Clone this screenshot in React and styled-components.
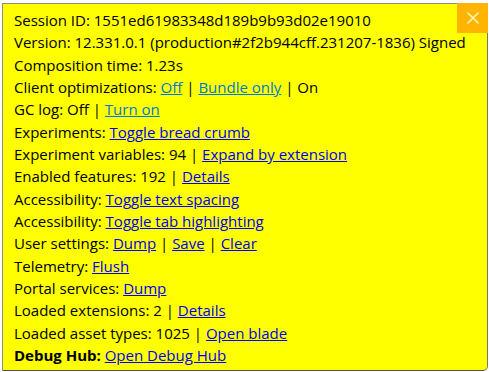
import React from "react";
import styled, { createGlobalStyle } from "styled-components";

const GlobalStyle = createGlobalStyle`
    html, body {
        margin: 0;
        padding: 0;
        background: #fff;
    }
    body {
        font-family: "Open Sans", "Noto Sans", sans-serif;
    }
`;

const Page = styled.div`
    padding: 3px 1px 1px 2px;
`;

const Panel = styled.div`
    position: relative;
    background: #ffff00;
    border: 1px solid #8a8a8a;
    border-bottom-color: #555;
    border-right-color: #777;
    border-bottom-right-radius: 5px;
    padding: 5px 11px 2px 11px;
    color: #000;
    font-size: 15px;
    line-height: 22.33px;
    height: 368px;
    box-sizing: border-box;
`;

const Close = styled.button`
    position: absolute;
    top: -1px;
    right: -1px;
    width: 31px;
    height: 30px;
    border: none;
    padding: 0;
    background: #ffb400;
    display: flex;
    align-items: center;
    justify-content: center;
    cursor: pointer;
`;

const Row = styled.div`
    white-space: nowrap;
`;

const Link = styled.a`
    color: ${props => (props.light ? "#0078d4" : "#0000ee")};
    text-decoration: underline;
    cursor: pointer;
`;

const Label = styled.span`
    font-weight: ${props => (props.bold ? 700 : 400)};
`;

const rows = [
    { label: "Session ID: 1551ed61983348d189b9b93d02e19010" },
    { label: "Version: 12.331.0.1 (production#2f2b944cff.231207-1836) Signed" },
    { label: "Composition time: 1.23s" },
    {
        label: "Client optimizations: ",
        links: [{ text: "Off", light: true }, { text: "Bundle only", light: true }],
        tail: " | On",
    },
    { label: "GC log: Off | ", links: [{ text: "Turn on", light: true }] },
    { label: "Experiments: ", links: [{ text: "Toggle bread crumb" }] },
    { label: "Experiment variables: 94 | ", links: [{ text: "Expand by extension" }] },
    { label: "Enabled features: 192 | ", links: [{ text: "Details" }] },
    { label: "Accessibility: ", links: [{ text: "Toggle text spacing" }] },
    { label: "Accessibility: ", links: [{ text: "Toggle tab highlighting" }] },
    { label: "User settings: ", links: [{ text: "Dump" }, { text: "Save" }, { text: "Clear" }] },
    { label: "Telemetry: ", links: [{ text: "Flush" }] },
    { label: "Portal services: ", links: [{ text: "Dump" }] },
    { label: "Loaded extensions: 2 | ", links: [{ text: "Details" }] },
    { label: "Loaded asset types: 1025 | ", links: [{ text: "Open blade" }] },
    { label: "Debug Hub:", bold: true, links: [{ text: "Open Debug Hub" }], space: true },
];

export default function App() {
    return (
        <Page>
            <GlobalStyle />
            <Panel>
                <Close aria-label="Close">
                    <svg width="14" height="14" viewBox="0 0 14 14">
                        <path d="M1.5 1.5L12.5 12.5M12.5 1.5L1.5 12.5" stroke="#fff6c0" strokeWidth="1.5" />
                    </svg>
                </Close>
                {rows.map((row, i) => (
                    <Row key={i}>
                        <Label bold={row.bold}>{row.label}</Label>
                        {row.space && " "}
                        {(row.links || []).map((link, j) => (
                            <React.Fragment key={j}>
                                {j > 0 && " | "}
                                <Link light={link.light}>{link.text}</Link>
                            </React.Fragment>
                        ))}
                        {row.tail}
                    </Row>
                ))}
            </Panel>
        </Page>
    );
}
